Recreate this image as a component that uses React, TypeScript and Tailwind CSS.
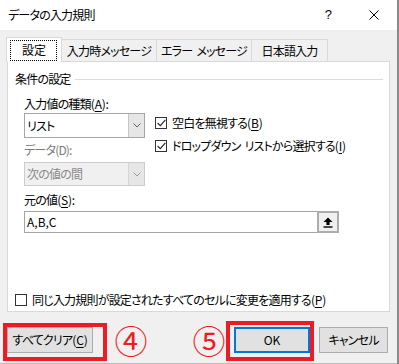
import React from "react";

function Chevron({ disabled }: { disabled?: boolean }) {
  return (
    <svg width="8" height="5" viewBox="0 0 8 5">
      <path d="M0.5 0.5 L4 4 L7.5 0.5" fill="none" stroke={disabled ? "#9a9a9a" : "#606060"} strokeWidth="1" />
    </svg>
  );
}

function CheckBox({ checked }: { checked?: boolean }) {
  return (
    <span className="w-[12px] h-[12px] border border-[#333333] bg-white flex items-center justify-center shrink-0">
      {checked && (
        <svg width="9" height="8" viewBox="0 0 9 8">
          <path d="M0.6 4 L3.3 6.7 L8.4 0.9" fill="none" stroke="#222222" strokeWidth="1.1" />
        </svg>
      )}
    </span>
  );
}

function Key({ k }: { k: string }) {
  return (
    <span className="tracking-[-0.2px]">
      (<span className="underline underline-offset-2">{k}</span>)
    </span>
  );
}

// narrow gap used where the original text has a half-width space
const Gap = () => <span className="inline-block w-[4px]" />;

export default function App() {
  return (
    <div className="w-[399px] h-[364px] flex bg-[#f0f0f0] text-black text-[12px] leading-[16px] tracking-[-0.8px] overflow-hidden font-['Noto_Sans_CJK_JP',sans-serif] [font-feature-settings:'palt']">
      <div className="w-[397px] h-full flex flex-col relative">
        {/* title bar */}
        <div className="h-[30px] bg-white flex items-center shrink-0">
          <span className="pl-[8px] flex-1">データの入力規則</span>
          <span className="w-[46px] h-full flex items-center justify-center text-[13px] font-['Liberation_Sans',sans-serif]">?</span>
          <span className="w-[46px] h-full flex items-center justify-center">
            <svg width="10" height="10" viewBox="0 0 10 10">
              <path d="M0.5 0.5 L9.5 9.5 M9.5 0.5 L0.5 9.5" stroke="#000" strokeWidth="1" />
            </svg>
          </span>
        </div>

        {/* tabs */}
        <div className="mt-[7px] pl-[6px] flex items-end h-[24px] shrink-0 whitespace-nowrap">
          <div className="relative z-10 w-[56px] h-[25px] -mb-px bg-white border border-[#d9d9d9] border-b-0 flex items-center justify-center">
            <span className="absolute left-[3px] right-[4px] top-[2px] bottom-[1px] border border-dotted border-black" />
            <span className="tracking-[0px]">設定</span>
          </div>
          <div className="w-[96px] h-[22px] -ml-px bg-[#f0f0f0] border border-[#d9d9d9] border-b-0 flex items-center justify-center">
            入力時メッセージ
          </div>
          <div className="w-[96px] h-[22px] -ml-px bg-[#f0f0f0] border border-[#d9d9d9] border-b-0 flex items-center justify-center">
            エラー<Gap />メッセージ
          </div>
          <div className="w-[77px] h-[22px] -ml-px bg-[#f0f0f0] border border-[#d9d9d9] border-b-0 flex items-center justify-center">
            日本語入力
          </div>
        </div>

        {/* panel */}
        <div className="mx-[7px] h-[251px] shrink-0 bg-white border border-[#d9d9d9] flex flex-col pl-[7px] pr-[6px]">
          <div className="mt-[9px] h-[16px] flex items-center">
            <span>条件の設定</span>
            <div className="flex-1 h-px bg-[#dcdcdc] ml-[4px]" />
          </div>

          <div className="pl-[9px] flex-1 flex flex-col">
            <div className="mt-[9px]">
              入力値の種類<Key k="A" />:
            </div>
            <div className="mt-[1px] flex">
              <div className="w-[121px] flex flex-col">
                <div className="h-[25px] border border-[#a5a5a5] bg-white flex">
                  <span className="flex-1 pl-[2px] flex items-center">リスト</span>
                  <span className="w-[16px] bg-[#e6e6e6] border-l border-[#c5c5c5] flex items-center justify-center">
                    <Chevron />
                  </span>
                </div>
                <div className="mt-[4px] text-[#7a7a7a]">
                  データ(D):
                </div>
                <div className="mt-[4px] h-[24px] border border-[#cccccc] bg-[#f0f0f0] flex">
                  <span className="flex-1 pl-[2px] flex items-center text-[#8a8a8a]">次の値の間</span>
                  <span className="w-[16px] bg-[#e6e6e6] border-l border-[#d5d5d5] flex items-center justify-center">
                    <Chevron disabled />
                  </span>
                </div>
              </div>
              <div className="ml-[10px] flex flex-col">
                <div className="mt-[2px] h-[16px] flex items-center gap-[5px]">
                  <CheckBox checked />
                  <span>
                    空白を無視する<Key k="B" />
                  </span>
                </div>
                <div className="mt-[7px] h-[16px] flex items-center gap-[5px]">
                  <CheckBox checked />
                  <span>
                    ドロップダウン<Gap />リストから選択する<Key k="I" />
                  </span>
                </div>
              </div>
            </div>
            <div className="mt-[6px]">
              元の値<Key k="S" />:
            </div>
            <div className="mt-[3px] w-[315px] h-[22px] border border-[#a5a5a5] bg-white flex">
              <span className="flex-1 pl-[2px] flex items-center tracking-[0px]">A,B,C</span>
              <span className="w-[22px] -my-px -mr-px border-2 border-[#adadad] bg-[#f0f0f0] flex items-center justify-center">
                <svg width="10" height="11" viewBox="0 0 10 11">
                  <path d="M5 0.5 L9.5 5 L6.6 5 L6.6 8 L3.4 8 L3.4 5 L0.5 5 Z" fill="#000" />
                  <path d="M0.5 10 L9.5 10" stroke="#000" strokeWidth="1.4" />
                </svg>
              </span>
            </div>
          </div>

          <div className="mb-[3px] h-[16px] flex items-center gap-[5px]">
            <CheckBox />
            <span>
              同じ入力規則が設定されたすべてのセルに変更を適用する<Key k="P" />
            </span>
          </div>
        </div>

        {/* buttons */}
        <div className="flex-1 flex items-start pt-[15px] pl-[7px] pr-[9px]">
          <div className="w-[86px] h-[26px] bg-[#e1e1e1] border border-[#adadad] flex items-center justify-center">
            すべてクリア<Key k="C" />
          </div>
          <span className="ml-[24px] w-[28px] h-[26px] flex items-center justify-center text-[33px] tracking-[0px] text-[#ed1c24]">④</span>
          <span className="ml-[50px] w-[28px] h-[26px] flex items-center justify-center text-[33px] tracking-[0px] text-[#ed1c24]">⑤</span>
          <div className="ml-auto w-[76px] h-[26px] bg-[#e1e1e1] border-2 border-[#0078d7] flex items-center justify-center tracking-[0px]">
            OK
          </div>
          <div className="ml-[9px] w-[69px] h-[26px] bg-[#e1e1e1] border border-[#adadad] flex items-center justify-center">
            キャンセル
          </div>
        </div>

        {/* red annotation frames */}
        <div className="absolute left-[3px] top-[323px] w-[104px] h-[38px] border-4 border-[#ed1c24]" />
        <div className="absolute left-[226px] top-[321px] w-[88px] h-[40px] border-4 border-[#ed1c24]" />

        <div className="h-px bg-[#bdbdbd] shrink-0" />
      </div>
      <div className="w-[2px] h-full bg-[#8a8a8a]" />
    </div>
  );
}
